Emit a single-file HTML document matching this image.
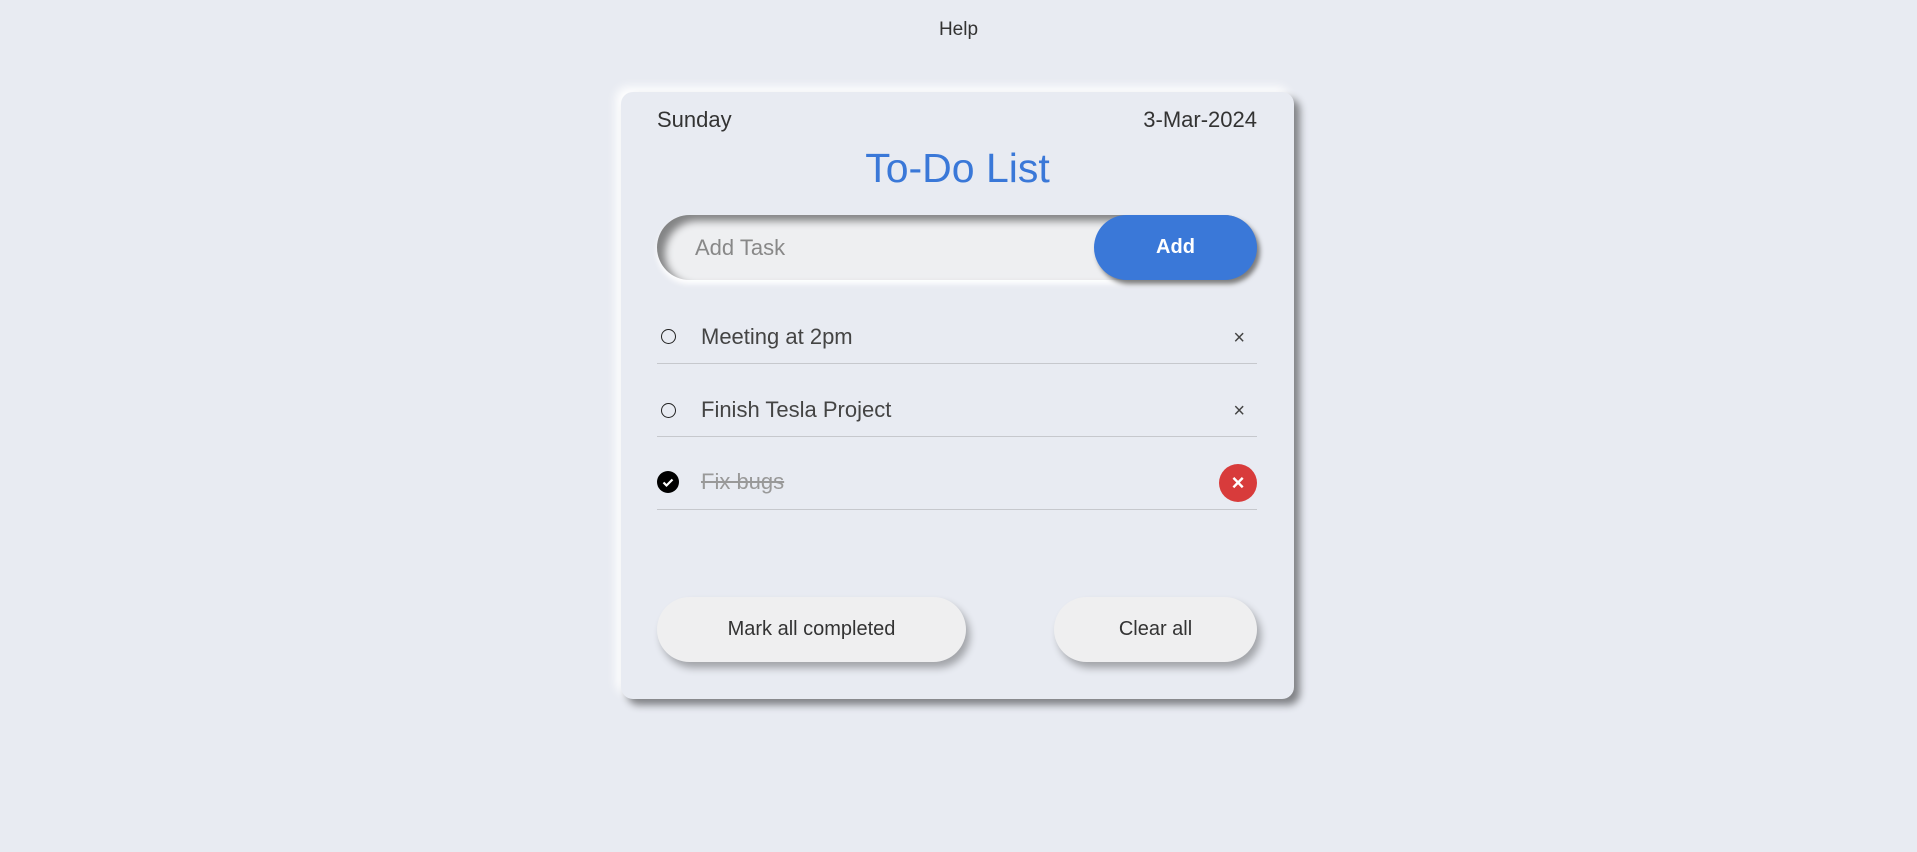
<!DOCTYPE html>
<html><head><meta charset="utf-8"><style>
*{box-sizing:border-box;margin:0;padding:0}
body{width:1917px;height:852px;background:#e8ebf2;font-family:"Liberation Sans",sans-serif;color:#333;position:relative;overflow:hidden}
.help{position:absolute;top:19px;left:0;width:1917px;text-align:center;font-size:19px;color:#333}
.card{position:absolute;left:621px;top:92px;width:673px;height:607px;background:#e8ebf2;border-radius:12px;box-shadow:6px 6px 8px rgba(0,0,0,.45),-5px -5px 10px #fff}
.day{position:absolute;left:36px;top:15px;font-size:22px;color:#333}
.date{position:absolute;right:37px;top:15px;font-size:22px;color:#333}
.title{position:absolute;left:0;width:100%;text-align:center;font-size:41px;color:#3a78d8}
.inp{position:absolute;left:36px;top:123px;width:600px;height:65px;border-radius:33px;background:#eeeff1;box-shadow:inset 8px 6px 8px rgba(0,0,0,.45),0 4px 6px #fff}
.inp span{position:absolute;left:38px;top:20px;font-size:22px;color:#888}
.add{position:absolute;right:0;top:0;width:163px;height:65px;border-radius:33px;background:#3a78d8;color:#fff;font-size:20px;font-weight:bold;text-align:center;line-height:65px;box-shadow:3px 4px 5px rgba(0,0,0,.5)}
.row{position:absolute;left:36px;width:600px;height:73px;border-bottom:1.5px solid #c6c8cd}
.row .t{position:absolute;left:44px;top:0;font-size:22px;color:#444}
.ck{position:absolute;left:4px;width:15px;height:15px;border:1.5px solid #222;border-radius:50%}
.x{position:absolute;right:12px;font-size:20px;color:#444}
.btn{position:absolute;top:505px;height:65px;border-radius:33px;background:#efeff0;box-shadow:4px 6px 8px rgba(0,0,0,.3);font-size:20px;text-align:center;line-height:65px;color:#333}
</style></head><body>
<div class="help">Help</div>
<div class="card">
<div class="day">Sunday</div><div class="date">3-Mar-2024</div>
<div class="title" style="top:53px">To-Do List</div>
<div class="inp"><span>Add Task</span><div class="add">Add</div></div>
<div class="row" style="top:199px"><div class="ck" style="top:38px"></div><div class="t" style="top:33px">Meeting at 2pm</div><div class="x" style="top:36px">×</div></div>
<div class="row" style="top:272px"><div class="ck" style="top:39px"></div><div class="t" style="top:33px">Finish Tesla Project</div><div class="x" style="top:36px">×</div></div>
<div class="row" style="top:345px"><svg style="position:absolute;left:0;top:34px" width="22" height="22" viewBox="0 0 22 22"><circle cx="11" cy="11" r="11" fill="#000"/><path d="M6.5 11.5l3 3 6-6" stroke="#fff" stroke-width="2.2" fill="none"/></svg><div class="t" style="top:32px;color:#999;text-decoration:line-through">Fix bugs</div><div style="position:absolute;right:0;top:27px;width:38px;height:38px;border-radius:50%;background:#d83b3b;color:#fff;text-align:center;line-height:37px;font-size:22px;font-weight:bold">×</div></div>
<div class="btn" style="left:36px;width:309px">Mark all completed</div>
<div class="btn" style="left:433px;width:203px">Clear all</div>
</div>
</body></html>
